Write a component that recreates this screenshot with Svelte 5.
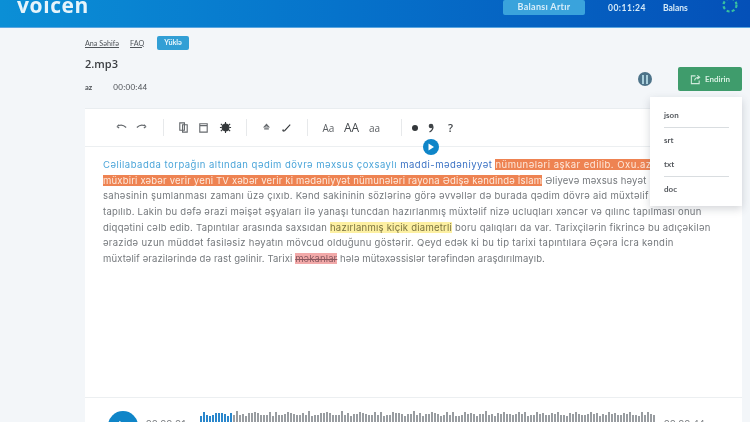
<script>
  const bars = Array.from({ length: 152 }, (_, i) => ({
    h: 23 + Math.round(Math.abs(Math.sin(i * 1.7) * Math.cos(i * 0.53)) * 9),
    played: i < 11
  }));
</script>

<div class="page">
  <header>
    <div class="logo">voicen</div>
    <div class="head-right">
      <button class="topup">Balansı Artır</button>
      <span class="clock">00:11:24</span>
      <span class="balance">Balans</span>
      <svg class="spinner" width="18" height="18" viewBox="0 0 18 18">
        <circle cx="9" cy="9" r="6.5" fill="none" stroke="#38c0a0" stroke-width="2.2" stroke-dasharray="3 2.2" />
      </svg>
    </div>
  </header>

  <main>
    <div class="top">
      <div>
        <nav>
          <a href="#home">Ana Səhifə</a>
          <a href="#faq">FAQ</a>
          <span class="active">Yüklə</span>
        </nav>
        <h1>2.mp3</h1>
        <div class="meta"><b>az</b><span>00:00:44</span></div>
      </div>
      <div class="actions">
        <span class="pause"><i></i><i></i></span>
        <div class="export">
          <button class="download">
            <svg width="11" height="11" viewBox="0 0 12 12" fill="none" stroke="#cfeadb" stroke-width="1.2">
              <path d="M6 2H1.5v8.5H10V7M5 7c.5-2.500 2-3.500 5-3.500M8 1.500l2.500 2-2.500 2" />
            </svg>
            Endirin
          </button>
          <ul class="menu">
            <li class="line">json</li>
            <li>srt</li>
            <li class="line">txt</li>
            <li>doc</li>
          </ul>
        </div>
      </div>
    </div>

    <section class="card">
      <div class="tools">
        <svg class="ic" viewBox="0 0 14 14"><path d="M2 6c3-2 7-2 10 1M2 6l2.500-2M2 6l2.500 1.500" /></svg>
        <svg class="ic" viewBox="0 0 14 14"><path d="M12 6C9 4 5 4 2 7M12 6L9.500 4M12 6L9.500 7.500" /></svg>
        <span class="sep s1"></span>
        <svg class="ic" viewBox="0 0 14 14"><path d="M3 2h5v8H3zM6 4h5v8H6z" /></svg>
        <svg class="ic" viewBox="0 0 14 14"><path d="M3 3h8v9H3zM3 5h8" /></svg>
        <svg class="ic dark bright" viewBox="0 0 14 14"><circle cx="7" cy="7" r="3.600" fill="#34383b" /><path d="M7 1v12M2 3l2 2M12 3l-2 2M2 11l2-2M12 11l-2-2M1 7h2M11 7h2" /></svg>
        <span class="sep s2"></span>
        <svg class="ic" viewBox="0 0 14 14"><path d="M7 3.500L9.500 6.500H4.500zM4.500 8.500h5" /></svg>
        <svg class="ic dark" viewBox="0 0 14 14"><path d="M3 11l2-.5 6-6.500M3 11l.5-2" /></svg>
        <span class="sep s3"></span>
        <span class="case">Aa</span>
        <span class="case big">AA</span>
        <span class="case">aa</span>
        <span class="sep s4"></span>
        <span class="dot"></span>
        <svg class="comma" width="6" height="10" viewBox="0 0 6 10"><circle cx="3" cy="3" r="2.300" fill="#3f4347" /><path d="M5 3.500C5 6 3.500 8 1.500 9" fill="none" stroke="#3f4347" stroke-width="1.300" /></svg>
        <span class="mark">?</span>
        <span class="floating"><svg width="8" height="8" viewBox="0 0 8 8"><path d="M1.500 .5L7 4 1.500 7.500z" fill="#fff" /></svg></span>
      </div>

      <div class="text">
        <p class="lead"><span class="said">Cəlilabadda torpağın altından qədim dövrə məxsus çoxsaylı</span> <span class="now">maddi-mədəniyyət</span> <mark class="hot">nümunələri aşkar edilib. Oxu.az-ın</mark></p>
        <p class="second"><mark class="hot">müxbiri xəbər verir yeni TV xəbər verir ki mədəniyyət nümunələri rayona Ədişə kəndində İslam</mark> Əliyevə məxsus həyət</p>
        <p>sahəsinin şumlanması zamanı üzə çıxıb. Kənd sakininin sözlərinə görə əvvəllər də burada qədim dövrə aid müxtəlif əşyalar</p>
        <p class="mid">tapılıb. Lakin bu dəfə ərazi məişət əşyaları ilə yanaşı tuncdan hazırlanmış müxtəlif nizə ucluqları xəncər və qılınc tapılması onun</p>
        <p class="mid">diqqətini cəlb edib. Tapıntılar arasında saxsıdan <mark class="warm">hazırlanmış kiçik diametrli</mark> boru qalıqları da var. Tarixçilərin fikrincə bu adıçəkilən</p>
        <p>ərazidə uzun müddət fasiləsiz həyatın mövcud olduğunu göstərir. Qeyd edək ki bu tip tarixi tapıntılara Əçəra İcra kəndin</p>
        <p class="last">müxtəlif ərazilərində də rast gəlinir. Tarixi <mark class="bad">məkanlar</mark> hələ mütəxəssislər tərəfindən araşdırılmayıb.</p>
      </div>

      <div class="player">
        <span class="play"><svg width="12" height="12" viewBox="0 0 8 8"><path d="M1.500 .5L7 4 1.500 7.500z" fill="#fff" /></svg></span>
        <span class="time">00:00:01</span>
        <div class="wave">
          {#each bars as bar}
            <i class:played={bar.played} style="height: {bar.h}px"></i>
          {/each}
        </div>
        <span class="time">00:00:44</span>
      </div>
    </section>
  </main>
</div>

<style>
  :global(body) {
    margin: 0;
  }
  .page {
    width: 750px;
    height: 422px;
    overflow: hidden;
    background: #f3f6f9;
    font-family: "Lato", "Liberation Sans", sans-serif;
    color: #4b4f54;
    filter: blur(0.55px);
  }
  header {
    height: 28px;
    box-sizing: border-box;
    border-bottom: 1px solid #5aa6e0;
    background: linear-gradient(90deg, #0b8fd6 0%, #0673cb 45%, #0450b8 100%);
    display: flex;
    justify-content: space-between;
    align-items: flex-start;
    padding-left: 17px;
    overflow: hidden;
  }
  .logo {
    margin-top: -8px;
    font: 700 21px/26px "Open Sans", sans-serif;
    color: #e6f4fb;
    letter-spacing: 0.6px;
  }
  .head-right {
    display: flex;
    align-items: center;
    height: 15px;
    color: #d7ebf8;
    font-size: 8.500px;
    font-weight: 700;
  }
  .topup {
    width: 82px;
    height: 15px;
    margin-right: 23px;
    padding: 0 0 3px;
    border: 0;
    border-radius: 2px;
    background: #3aa3dc;
    color: #d8eef9;
    font: 700 9px "Lato", sans-serif;
    letter-spacing: 0.3px;
  }
  .clock {
    width: 55px;
    letter-spacing: 0.5px;
  }
  .balance {
    width: 58px;
  }
  .spinner {
    margin-top: -5px;
    margin-right: 11px;
  }
  main {
    padding-left: 85px;
    width: 657px;
  }
  .top {
    height: 80px;
    display: flex;
    justify-content: space-between;
    align-items: flex-start;
  }
  nav {
    margin-top: 8px;
    height: 14px;
    display: flex;
    align-items: center;
    gap: 11px;
    font-size: 7.200px;
  }
  nav a {
    color: #50555a;
    text-decoration: underline;
  }
  .active {
    width: 32px;
    height: 14px;
    margin-left: 2px;
    border-radius: 2px;
    background: #329fd5;
    color: #e8f6fc;
    font-weight: 700;
    text-align: center;
    line-height: 14px;
  }
  h1 {
    margin: 7px 0 0;
    font: 600 11px/14px "Open Sans", sans-serif;
    color: #3b3e42;
  }
  .meta {
    margin-top: 12px;
    display: flex;
    gap: 21px;
    font-size: 7.500px;
    line-height: 9px;
  }
  .meta span {
    font-size: 8px;
    letter-spacing: 0.3px;
  }
  .actions {
    margin-top: 39px;
    display: flex;
    gap: 26px;
    align-items: center;
  }
  .pause {
    width: 14px;
    height: 14px;
    border-radius: 50%;
    background: #4d7389;
    display: flex;
    justify-content: center;
    align-items: center;
    gap: 1.500px;
  }
  .pause i {
    width: 2px;
    height: 9px;
    background: #a9cfdc;
  }
  .export {
    position: relative;
  }
  .download {
    width: 64px;
    height: 24px;
    border: 0;
    border-radius: 2px;
    background: #3f9c6c;
    color: #d5eee0;
    font: 700 8px "Lato", sans-serif;
    display: flex;
    align-items: center;
    justify-content: center;
    gap: 4px;
  }
  .menu {
    position: absolute;
    z-index: 2;
    top: 30px;
    right: 0;
    width: 92px;
    height: 109px;
    box-sizing: border-box;
    margin: 0;
    padding: 6px 13px 0 14px;
    list-style: none;
    background: #fff;
    box-shadow: 0 3px 8px rgba(60, 70, 80, 0.22);
    font-size: 8px;
    font-weight: 700;
    color: #55595e;
  }
  .menu li {
    height: 24px;
    line-height: 24px;
  }
  .menu .line {
    border-bottom: 1px solid #d9dde0;
  }
  .card {
    background: #fff;
    height: 340px;
    border-top: 1px solid #e9edf0;
  }
  .tools {
    position: relative;
    height: 37px;
    padding-left: 30px;
    border-bottom: 1px solid #eceff1;
    display: flex;
    align-items: center;
    font-size: 10px;
  }
  .ic {
    width: 13px;
    height: 13px;
    margin-right: 7px;
    fill: none;
    stroke: #65696d;
    stroke-width: 1.200;
  }
  .ic.dark {
    stroke: #34383b;
  }
  .bright {
    margin-left: 2px;
  }
  .sep {
    width: 1px;
    height: 17px;
    background: #e7e9eb;
  }
  .s1 {
    margin: 0 13px 0 8px;
  }
  .s2 {
    margin: 0 13px 0 7px;
  }
  .s3 {
    margin: 0 9px 0 7px;
  }
  .s4 {
    margin: 0 10px 0 15px;
  }
  .case {
    width: 23px;
    text-align: center;
    color: #5b5f63;
    font: 500 10px "Open Sans", sans-serif;
  }
  .case.big {
    font-size: 12px;
    color: #44484c;
  }
  .dot {
    width: 6px;
    height: 6px;
    border-radius: 50%;
    background: #33373a;
    margin-right: 10px;
  }
  .comma {
    margin-right: 14px;
  }
  .mark {
    color: #3f4347;
    font: 600 11px "Open Sans", sans-serif;
  }
  .floating {
    position: absolute;
    left: 338px;
    top: 30px;
    width: 16px;
    height: 16px;
    border-radius: 50%;
    background: #0f85c8;
    display: flex;
    align-items: center;
    justify-content: center;
  }
  .text {
    height: 240px;
    padding: 10px 0 0 18px;
    border-bottom: 1px solid #eceff1;
    font: 9.500px "Inter", sans-serif;
    color: #74787c;
  }
  .text p {
    margin: 0;
    height: 15.700px;
    line-height: 15.700px;
    white-space: nowrap;
    letter-spacing: 0.3px;
  }
  .text p.lead {
    letter-spacing: 0.49px;
  }
  .text p.last {
    letter-spacing: 0.11px;
  }
  .text p.second {
    letter-spacing: 0.19px;
  }
  .text p.mid {
    letter-spacing: 0.24px;
  }
  .said {
    color: #4ba5d9;
  }
  .now {
    color: #3b72c4;
  }
  mark {
    color: inherit;
  }
  .hot {
    background: #ee8352;
    color: #fde9dc;
  }
  .warm {
    background: #fdf0a2;
    color: #7a7340;
  }
  .bad {
    background: #f2a9a9;
    color: #8a5a60;
    text-decoration: line-through;
  }
  .player {
    padding: 13px 0 0 23px;
    display: flex;
    align-items: flex-start;
  }
  .play {
    flex: none;
    width: 30px;
    height: 30px;
    border-radius: 50%;
    background: #0f85c8;
    display: flex;
    align-items: center;
    justify-content: center;
  }
  .time {
    flex: none;
    margin: 7px 10px 0 8px;
    width: 44px;
    font-size: 9.500px;
    color: #777b7f;
    letter-spacing: 0.4px;
  }
  .wave {
    flex: none;
    width: 456px;
    display: flex;
    gap: 1px;
    align-items: center;
    height: 32px;
  }
  .wave i {
    width: 2px;
    background: #999da1;
  }
  .wave i.played {
    background: #2a87cc;
  }
</style>
